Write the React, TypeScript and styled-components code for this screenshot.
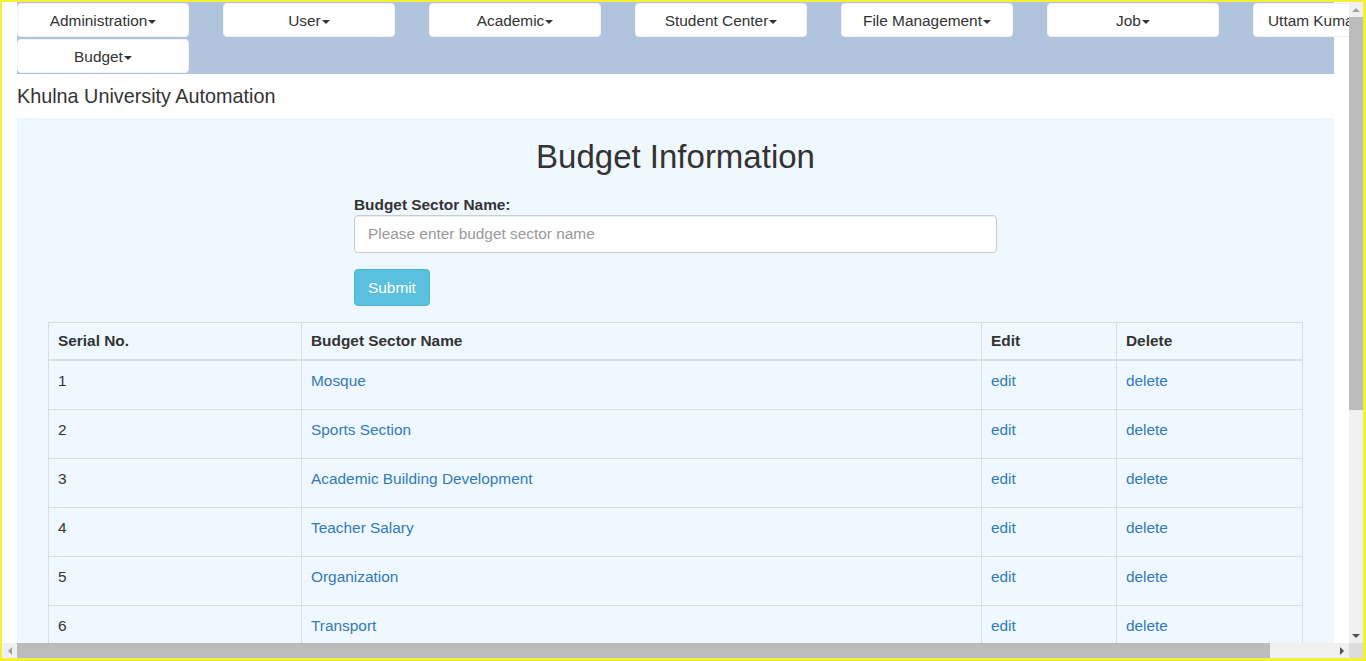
import React from 'react'
import styled, { createGlobalStyle } from 'styled-components'

const GlobalStyle = createGlobalStyle`
  html, body {
    margin: 0;
    padding: 0;
    overflow: hidden;
  }
  body {
    font-family: "Liberation Sans", Arial, sans-serif;
    font-size: 15.4px;
    color: #333;
  }
`

// browser window: yellow frame, page area and the two scroll bars
const Frame = styled.div`
  box-sizing: border-box;
  width: 1366px;
  height: 661px;
  border-style: solid;
  border-color: #f5f037;
  border-width: 2px 3px 3px 2px;
  background: #fff;
  display: grid;
  grid-template-columns: 1fr 14px;
  grid-template-rows: 1fr 15px;
`

const Viewport = styled.div`
  overflow: hidden;
  min-width: 0;
  min-height: 0;
  background: #fff;
`

const ScrollBar = styled.div<{ $vertical?: boolean }>`
  display: flex;
  flex-direction: ${p => (p.$vertical ? 'column' : 'row')};
  background: #f0f0f0;
`

const ScrollArrow = styled.div<{ $dir: 'up' | 'down' | 'left' | 'right'; $off?: boolean }>`
  flex: 0 0 15px;
  display: flex;
  align-items: center;
  justify-content: center;
  &::after {
    content: '';
    width: 0;
    height: 0;
    ${p => {
      const c = p.$off ? '#a3a3a3' : '#505050'
      switch (p.$dir) {
        case 'up':
          return `border-bottom: 4px solid ${c}; border-left: 4px solid transparent; border-right: 4px solid transparent;`
        case 'down':
          return `border-top: 4px solid ${c}; border-left: 4px solid transparent; border-right: 4px solid transparent;`
        case 'left':
          return `border-right: 4px solid ${c}; border-top: 4px solid transparent; border-bottom: 4px solid transparent;`
        default:
          return `border-left: 4px solid ${c}; border-top: 4px solid transparent; border-bottom: 4px solid transparent;`
      }
    }}
  }
`

const ScrollTrack = styled.div<{ $vertical?: boolean }>`
  flex: 1;
  display: flex;
  flex-direction: ${p => (p.$vertical ? 'column' : 'row')};
`

const ScrollThumb = styled.div`
  background: #bcbcbc;
  flex: none;
`

const ScrollCorner = styled.div`
  background: #dcdcdc;
`

const Container = styled.div`
  padding: 0 15px;
`

const Nav = styled.nav`
  background-color: #b0c4de;
  padding-top: 1px;
  height: 72px;
  box-sizing: border-box;
`

const Menu = styled.ul`
  list-style: none;
  margin: 0;
  padding: 0;
  display: grid;
  grid-template-columns: repeat(7, 172px);
  column-gap: 34px;
  row-gap: 2px;
`

const MenuButton = styled.li<{ $left?: boolean }>`
  box-sizing: border-box;
  height: 34px;
  padding-top: 2px;
  background: #fff;
  border: 1px solid #f2f2f2;
  border-radius: 4px;
  display: flex;
  align-items: center;
  justify-content: ${p => (p.$left ? 'flex-start' : 'center')};
  padding-left: ${p => (p.$left ? '14px' : '0')};
  white-space: nowrap;
  color: #333;
  font-size: 15.4px;
  cursor: pointer;
`

const Caret = styled.span`
  display: inline-block;
  width: 0;
  height: 0;
  margin-left: 1px;
  margin-top: 2px;
  border-top: 4px solid #333;
  border-left: 4px solid transparent;
  border-right: 4px solid transparent;
`

const SiteTitle = styled.h4`
  margin: 11px 0 11px;
  font-size: 19.8px;
  font-weight: 400;
  line-height: 22px;
  color: #333;
`

const Panel = styled.section`
  background-color: #f0f8ff;
  padding: 21px 31px 40px;
`

const Heading = styled.h2`
  margin: 0;
  text-align: center;
  font-size: 33px;
  font-weight: 400;
  line-height: 36px;
  color: #333;
`

const Form = styled.form`
  width: 643px;
  margin: 20px auto 16px;
  display: flex;
  flex-direction: column;
  align-items: flex-start;
`

const Label = styled.label`
  display: block;
  font-weight: 700;
  line-height: 20px;
  color: #333;
`

const Input = styled.input`
  box-sizing: border-box;
  width: 100%;
  height: 38px;
  padding: 6px 13px;
  font-family: inherit;
  font-size: 15.4px;
  color: #555;
  background: #fff;
  border: 1px solid #ccc;
  border-radius: 4px;
  box-shadow: inset 0 1px 1px rgba(0, 0, 0, 0.075);
  &::placeholder {
    color: #999;
  }
`

const SubmitButton = styled.button`
  margin-top: 16px;
  height: 37px;
  padding: 0 13px;
  font-family: inherit;
  font-size: 15.4px;
  color: #fff;
  background-color: #5bc0de;
  border: 1px solid #46b8da;
  border-radius: 4px;
  cursor: pointer;
`

const Table = styled.table`
  width: 1254px;
  table-layout: fixed;
  border-collapse: collapse;
  border: 1px solid #ddd;
`

const HeadCell = styled.th<{ $w: number }>`
  box-sizing: border-box;
  width: ${p => p.$w}px;
  text-align: left;
  font-weight: 700;
  padding: 7px 9px;
  line-height: 22px;
  border: 1px solid #ddd;
  border-bottom-width: 2px;
  color: #333;
`

const Row = styled.tr`
  height: 49px;
`

const Cell = styled.td`
  vertical-align: top;
  padding: 9px 9px;
  line-height: 22px;
  border: 1px solid #ddd;
  color: #333;
`

const Link = styled.a`
  color: #337ab7;
  text-decoration: none;
`

const menu = ['Administration', 'User', 'Academic', 'Student Center', 'File Management', 'Job']

const sectors = [
  'Mosque',
  'Sports Section',
  'Academic Building Development',
  'Teacher Salary',
  'Organization',
  'Transport',
  'Library',
  'Medical Center',
  'Research',
  'Hall Maintenance',
  'Examination',
  'Electricity',
]

const App = () => {
  return (
    <>
      <GlobalStyle />
      <Frame>
        <Viewport>
          <Container>
            <Nav>
              <Menu>
                {menu.map(m => (
                  <MenuButton key={m}>
                    {m}
                    <Caret />
                  </MenuButton>
                ))}
                <MenuButton $left>
                  Uttam Kumar
                  <Caret />
                </MenuButton>
                <MenuButton>
                  Budget
                  <Caret />
                </MenuButton>
              </Menu>
            </Nav>
            <SiteTitle>Khulna University Automation</SiteTitle>
            <Panel>
              <Heading>Budget Information</Heading>
              <Form onSubmit={e => e.preventDefault()}>
                <Label htmlFor="sector">Budget Sector Name:</Label>
                <Input id="sector" placeholder="Please enter budget sector name" />
                <SubmitButton type="submit">Submit</SubmitButton>
              </Form>
              <Table>
                <thead>
                  <tr>
                    <HeadCell $w={253}>Serial No.</HeadCell>
                    <HeadCell $w={680}>Budget Sector Name</HeadCell>
                    <HeadCell $w={135}>Edit</HeadCell>
                    <HeadCell $w={186}>Delete</HeadCell>
                  </tr>
                </thead>
                <tbody>
                  {sectors.map((s, i) => (
                    <Row key={s}>
                      <Cell>{i + 1}</Cell>
                      <Cell><Link href="#">{s}</Link></Cell>
                      <Cell><Link href="#">edit</Link></Cell>
                      <Cell><Link href="#">delete</Link></Cell>
                    </Row>
                  ))}
                </tbody>
              </Table>
            </Panel>
          </Container>
        </Viewport>
        <ScrollBar $vertical>
          <ScrollArrow $dir="up" $off />
          <ScrollTrack $vertical>
            <ScrollThumb style={{ height: 393 }} />
          </ScrollTrack>
          <ScrollArrow $dir="down" />
        </ScrollBar>
        <ScrollBar>
          <ScrollArrow $dir="left" $off />
          <ScrollTrack>
            <ScrollThumb style={{ width: 1253 }} />
          </ScrollTrack>
          <ScrollArrow $dir="right" />
        </ScrollBar>
        <ScrollCorner />
      </Frame>
    </>
  )
}

export default App
